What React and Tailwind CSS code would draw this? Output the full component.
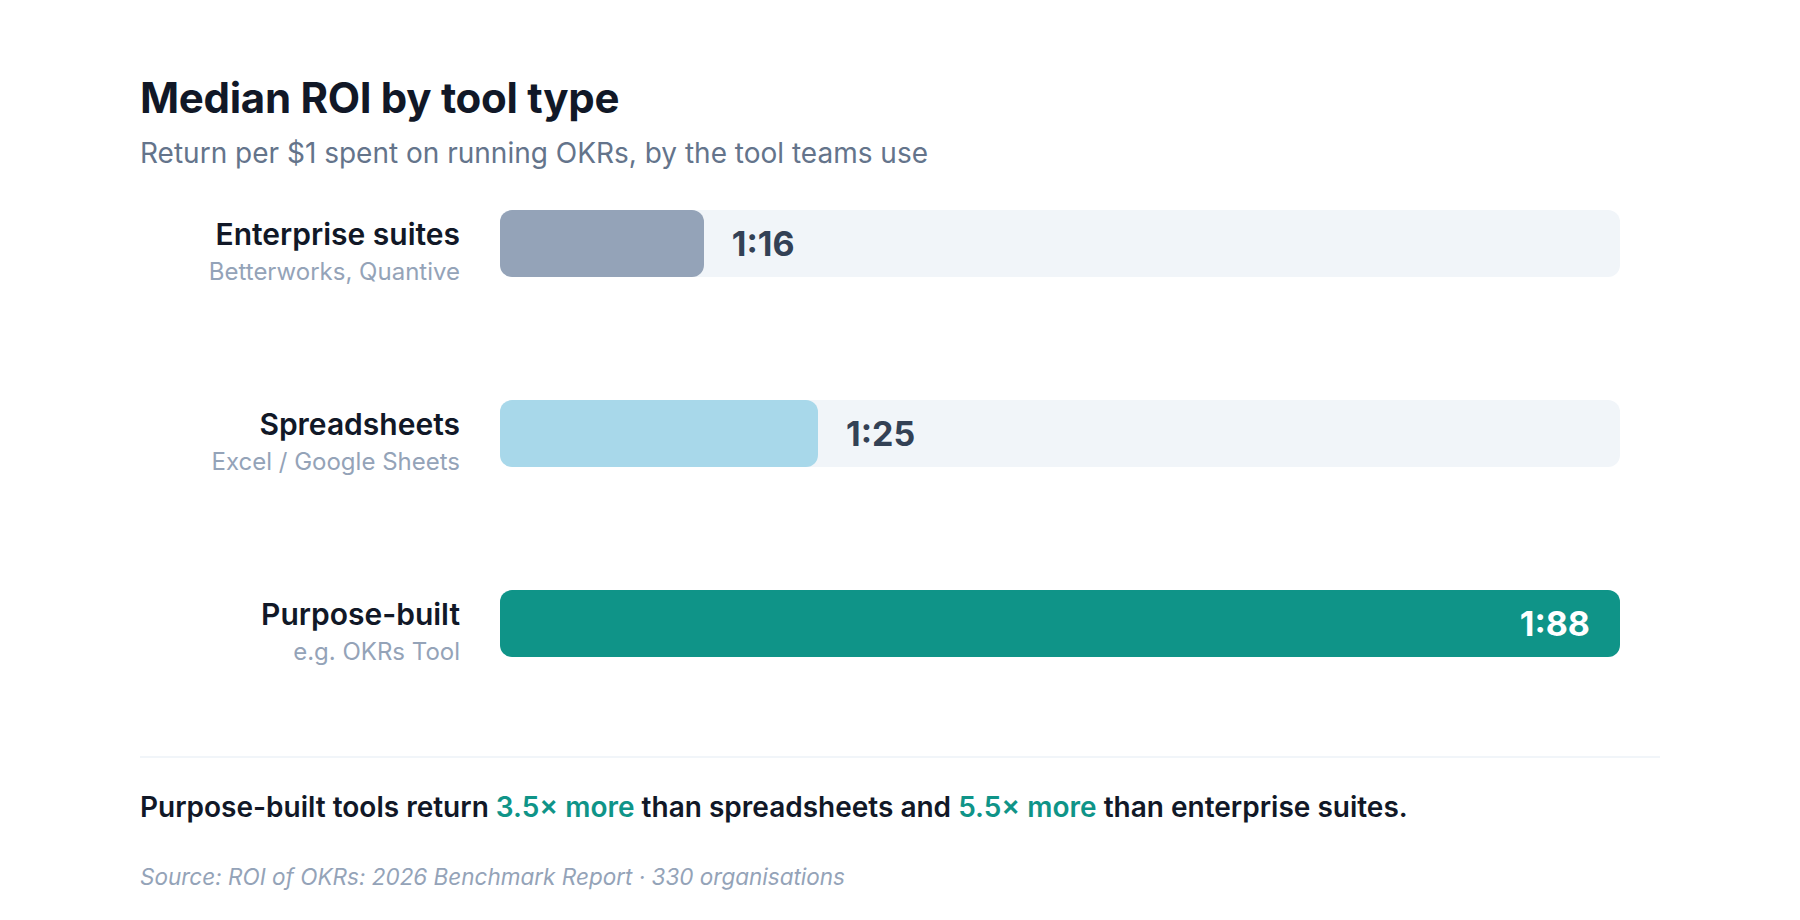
export default function App() {
  const rows = [
    { name: "Enterprise suites", sub: "Betterworks, Quantive", v: "1:16", w: "18.2%", fill: "bg-[#94a3b8]", full: false },
    { name: "Spreadsheets", sub: "Excel / Google Sheets", v: "1:25", w: "28.4%", fill: "bg-[#a8d8ea]", full: false },
    { name: "Purpose-built", sub: "e.g. OKRs Tool", v: "1:88", w: "100%", fill: "bg-[#0f9488]", full: true },
  ];
  return (
    <div className="w-[1800px] h-[920px] bg-white pl-[140px] pr-[140px] pt-[72px]" style={{ fontFamily: "Inter, sans-serif" }}>
      <h1 className="text-[42px] leading-[52px] font-bold text-[#111827] tracking-[-0.3px]">Median ROI by tool type</h1>
      <p className="mt-[10px] text-[28px] leading-[38px] text-[#64748b]">Return per $1 spent on running OKRs, by the tool teams use</p>
      <div className="mt-[38px] flex flex-col gap-[113px]">
        {rows.map((r) => (
          <div key={r.name} className="flex gap-[40px]">
            <div className="w-[320px] flex flex-col items-end pt-[5px] whitespace-nowrap">
              <div className="text-[30px] leading-[38px] font-semibold text-[#111827]">{r.name}</div>
              <div className="mt-[4px] text-[24px] leading-[30px] text-[#94a3b8]">{r.sub}</div>
            </div>
            <div className="w-[1120px] h-[67px] rounded-[12px] bg-[#f1f5f9] flex items-center">
              <div className={`h-full rounded-[12px] ${r.fill} flex items-center justify-end`} style={{ width: r.w }}>
                {r.full && <span className="pr-[30px] text-[34px] font-bold text-white">{r.v}</span>}
              </div>
              {!r.full && <span className="pl-[28px] text-[34px] font-bold text-[#334155]">{r.v}</span>}
            </div>
          </div>
        ))}
      </div>
      <div className="mt-[89px] border-t-2 border-[#f1f5f9] w-[1520px]" />
      <p className="mt-[30px] text-[28px] leading-[38px] font-semibold text-[#111827]">
        Purpose-built tools return <span className="text-[#0f9488]">3.5× more</span> than spreadsheets and <span className="text-[#0f9488]">5.5× more</span> than enterprise suites.
      </p>
      <p className="mt-[34px] text-[22.5px] italic text-[#94a3b8]">Source: ROI of OKRs: 2026 Benchmark Report · 330 organisations</p>
    </div>
  );
}
